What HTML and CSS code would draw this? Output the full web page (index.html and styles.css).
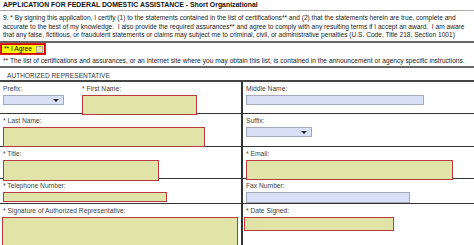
FILE: index.html
```html
<!DOCTYPE html>
<html>
<head>
<meta charset="utf-8">
<link rel="stylesheet" href="styles.css">
</head>
<body>
<div class="form">
  <div class="title">APPLICATION FOR FEDERAL DOMESTIC ASSISTANCE - Short Organizational</div>
  <div class="statement">9. * By signing this application, I certify (1) to the statements contained in the list of certifications** and (2) that the statements herein are true, complete and accurate to the best of my knowledge.&nbsp; I also provide the required assurances** and agree to comply with any resulting terms if I accept an award.&nbsp; I am aware that any false, fictitious, or fraudulent statements or claims may subject me to criminal, civil, or administrative penalties (U.S. Code, Title 218, Section 1001)</div>
  <div class="agree-row">
    <div class="agree"><span>** I Agree</span><span class="check"></span></div>
  </div>
  <div class="note">** The list of certifications and assurances, or an internet site where you may obtain this list, is contained in the announcement or agency specific instructions.</div>
  <div class="section">AUTHORIZED REPRESENTATIVE</div>
  <div class="grid">
    <div class="cell left r1">
      <div class="pair">
        <div class="field prefix">
          <div class="label">Prefix:</div>
          <div class="select s-prefix"><span class="arrow"></span></div>
        </div>
        <div class="field first">
          <div class="label">* First Name:</div>
          <div class="input req w-first"></div>
        </div>
      </div>
    </div>
    <div class="cell right r1">
      <div class="label">Middle Name:</div>
      <div class="input opt w-middle"></div>
    </div>
    <div class="cell left r2">
      <div class="label">* Last Name:</div>
      <div class="input req w-last"></div>
    </div>
    <div class="cell right r2">
      <div class="label">Suffix:</div>
      <div class="select s-suffix"><span class="arrow"></span></div>
    </div>
    <div class="cell left r3">
      <div class="label">* Title:</div>
      <div class="input req w-title"></div>
    </div>
    <div class="cell right r3">
      <div class="label">* Email:</div>
      <div class="input req w-email"></div>
    </div>
    <div class="cell left r4">
      <div class="label">* Telephone Number:</div>
      <div class="input req w-tel"></div>
    </div>
    <div class="cell right r4">
      <div class="label">Fax Number:</div>
      <div class="input opt w-fax"></div>
    </div>
    <div class="cell left r5">
      <div class="label">* Signature of Authorized Representative:</div>
      <div class="input req w-sig"></div>
    </div>
    <div class="cell right r5">
      <div class="label">* Date Signed:</div>
      <div class="input req w-date"></div>
    </div>
  </div>
</div>
</body>
</html>
```

FILE: styles.css
```css
* { box-sizing: border-box; }
html, body { margin: 0; padding: 0; background: #fff; }
body { font-family: "Liberation Sans", Arial, sans-serif; color: #222; overflow: hidden; }
.form { width: 474px; height: 245px; }

.title {
  font-weight: bold;
  font-size: 6.9px;
  line-height: 10px;
  padding: 0 3px;
  height: 11px;
  border-bottom: 1px solid #aaa;
  color: #111;
}
.statement {
  font-size: 6.6px;
  line-height: 8.6px;
  padding: 3px 3px 0 3px;
  height: 32px;
  border-bottom: 2px solid #666;
  color: #222;
}
.agree-row { display: flex; align-items: flex-start; height: 12px; padding-top: 1px; }
.agree {
  display: flex;
  align-items: center;
  width: 44px;
  height: 10px;
  background: #ffff00;
  border: 1px solid #d00000;
  outline: 1px solid #e02020;
  margin-left: 1px;
  font-size: 6.6px;
  line-height: 8px;
  padding-left: 2px;
  color: #000;
}
.agree .check {
  width: 7px;
  height: 7px;
  margin-left: auto;
  margin-right: 1px;
  background: #e2e2b0;
  border: 1px solid #b0b090;
}
.note {
  font-size: 6.6px;
  word-spacing: 0.1px;
  line-height: 9px;
  padding: 1px 3px 0 3px;
  height: 13px;
  border-bottom: 2px solid #666;
}
.section {
  font-size: 6.5px;
  letter-spacing: 0.05px;
  line-height: 9px;
  padding: 3px 7px 0 7px;
  height: 14px;
  border-bottom: 2px solid #444;
  color: #333;
}
.grid {
  display: grid;
  grid-template-columns: 243px 1fr;
  grid-template-rows: 32px 33px 32px 25px 1fr;
  height: 163px;
}
.cell { border-bottom: 1px solid #333; padding: 3px 0 0 3px; }
.cell.left { border-right: 2px solid #333; }
.cell.right { padding-left: 3px; }
.cell.r5 { border-bottom: none; }
.label {
  font-size: 6.7px;
  line-height: 8px;
  color: #444;
  height: 8px;
  margin-bottom: 2px;
}
.pair { display: flex; gap: 0; }
.field.prefix { width: 79px; }
.input { border: 1px solid #999; }
.input.req {
  background: #e0e4a8;
  border: 1.5px solid #b83a3a;
}
.input.opt {
  background: #d7e0f6;
  border: 1px solid #a2a8b8;
}
.select {
  position: relative;
  height: 10px;
  background: #d7e0f6;
  border: 1px solid #a2a8b8;
}
.select .arrow {
  position: absolute;
  right: 4px;
  top: 3px;
  width: 0; height: 0;
  border-left: 3px solid transparent;
  border-right: 3px solid transparent;
  border-top: 3px solid #222;
}
.s-prefix { width: 61px; }
.s-suffix { width: 66px; }
.w-first { width: 115px; height: 20px; }
.w-middle { width: 178px; height: 10px; }
.w-last { width: 202px; height: 20px; }
.w-title { width: 156px; height: 21px; }
.w-email { width: 207px; height: 20px; }
.w-tel { width: 164px; height: 10px; }
.w-fax { width: 164px; height: 11px; }
.w-sig { width: 236px; height: 29px; margin-left: -1px; border-width: 2px; }
.w-date { width: 150px; height: 14px; margin-left: -2px; }
```
